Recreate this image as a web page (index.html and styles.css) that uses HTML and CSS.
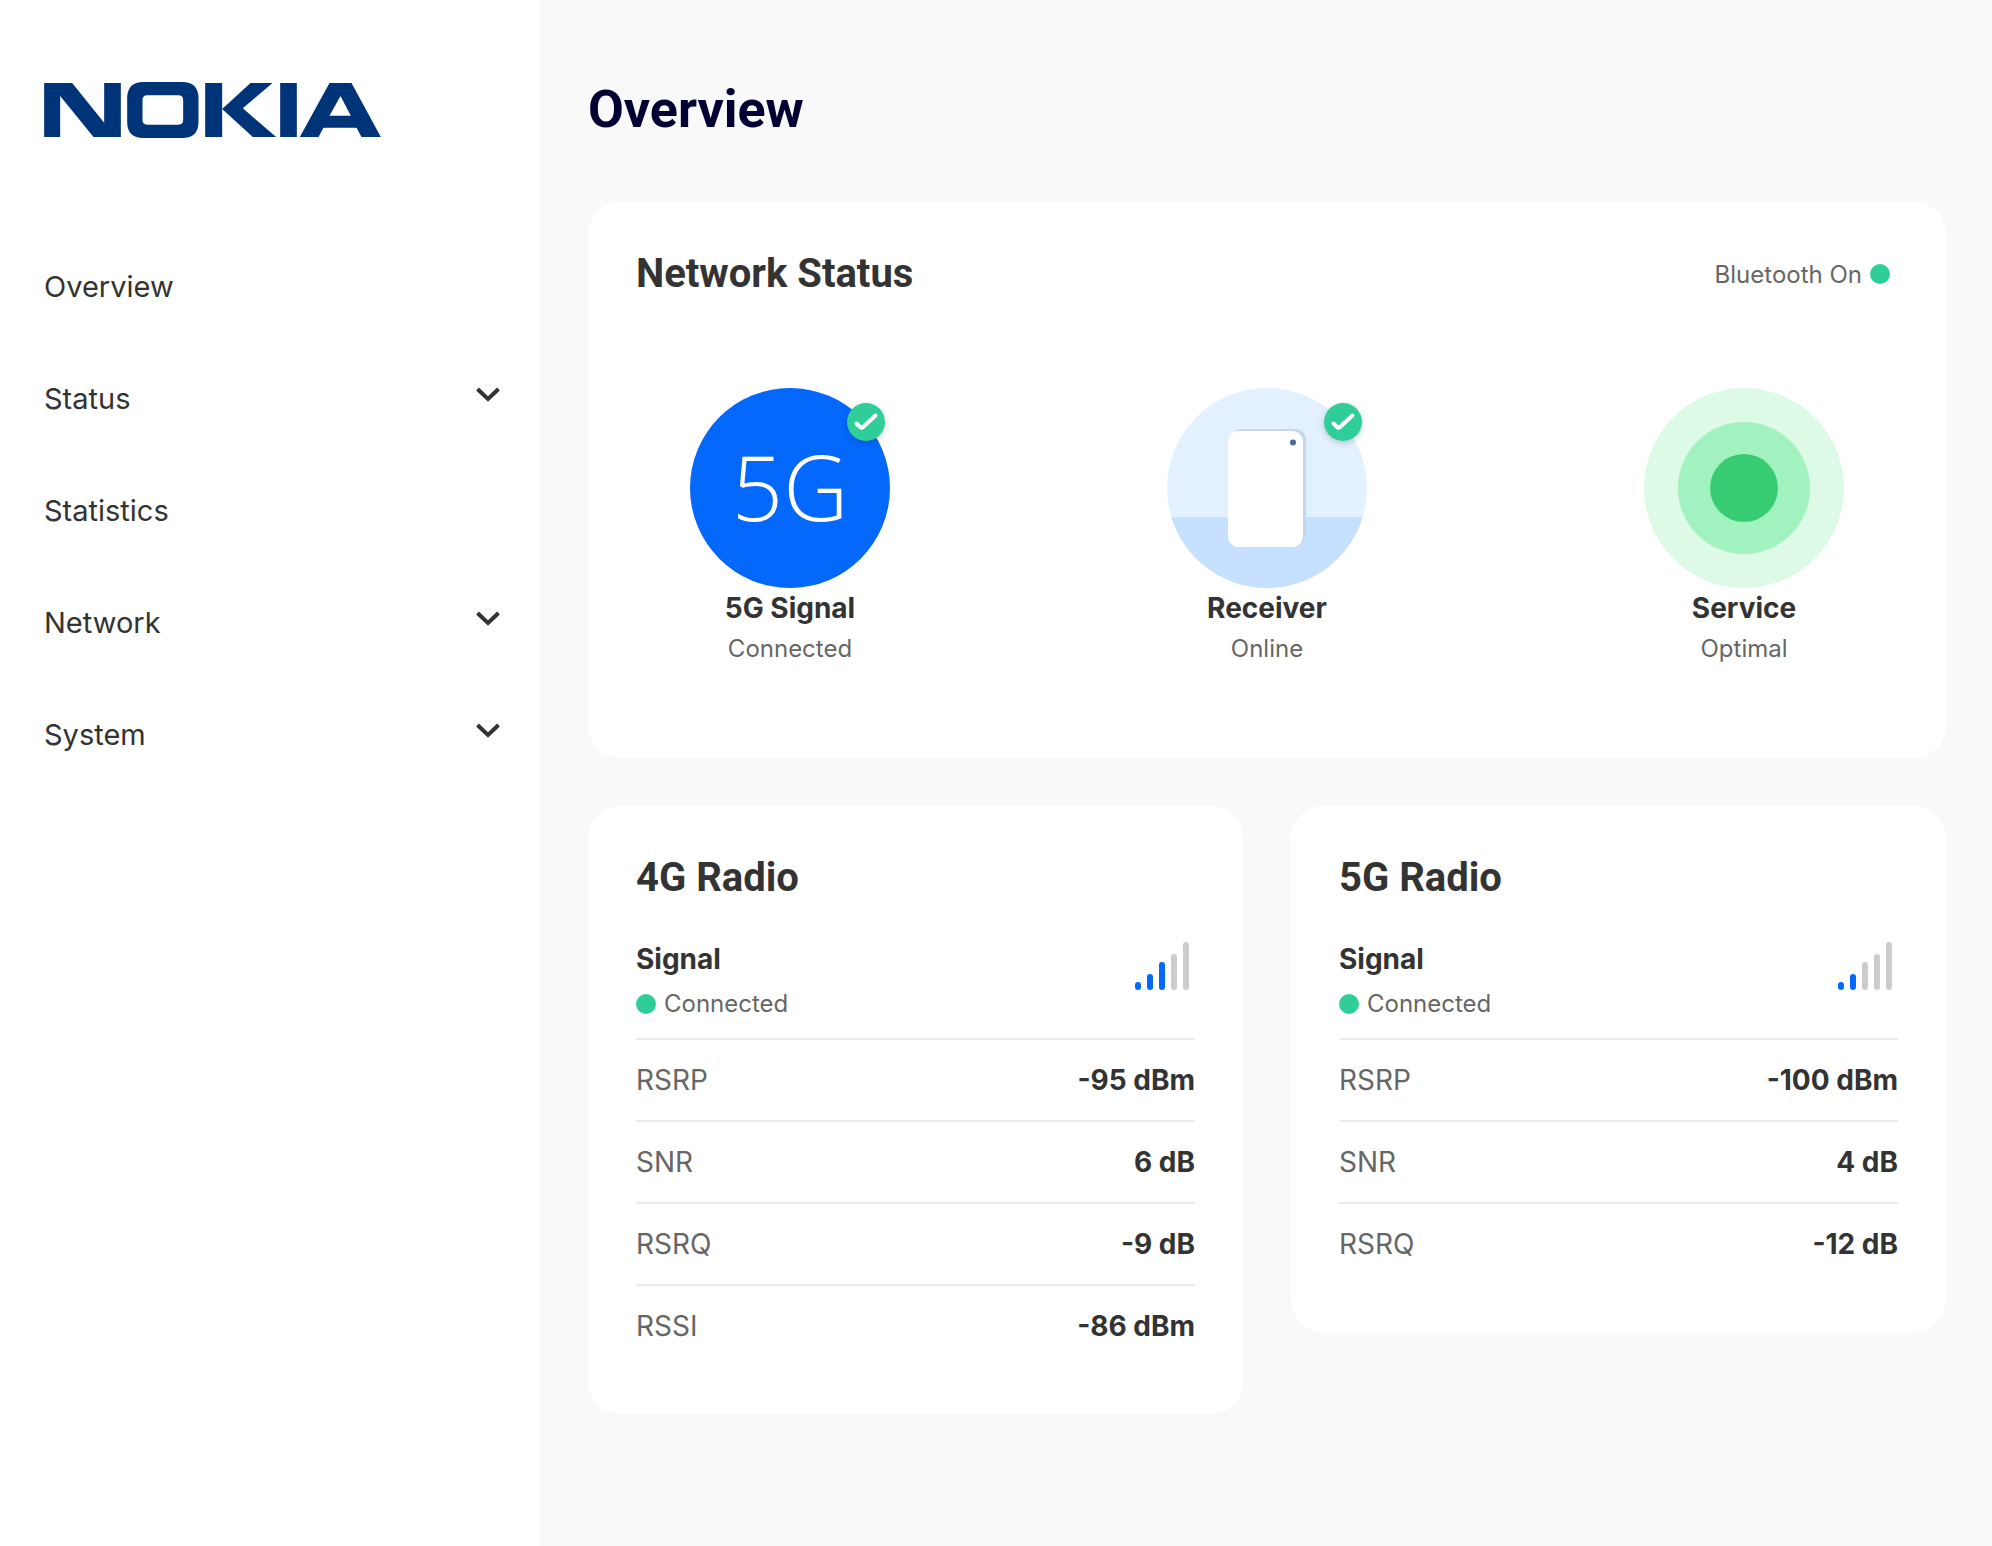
FILE: index.html
```html
<!DOCTYPE html>
<html lang="en">
<head>
<meta charset="utf-8">
<meta name="viewport" content="width=device-width, initial-scale=1">
<title>Overview</title>
<link rel="stylesheet" href="styles.css">
</head>
<body>
<div class="layout">
  <aside class="sidebar">
    <a class="brand" href="#" aria-label="Nokia">
      <svg class="brand-logo" viewBox="42 66 1010 168" aria-hidden="true">
        <path d="M42 69H126L222 188V69H272V231H190L90 108V231H42Z"/>
        <path fill-rule="evenodd" d="M340 66H456Q505 66 505 115V185Q505 234 456 234H340Q291 234 291 185V115Q291 66 340 66ZM351 106Q337 106 337 120V180Q337 194 351 194H445Q459 194 459 180V120Q459 106 445 106Z"/>
        <path d="M525 69H576V231H525ZM661 69H727L638 145L738 231H668L576 147Z"/>
        <path d="M750 69H800V231H750Z"/>
        <path fill-rule="evenodd" d="M898 69H964L1052 231H994L979 203H880L865 231H809ZM931 108L962 167H898Z"/>
      </svg>
    </a>
    <nav class="nav" aria-label="Main">
      <a class="nav-item" href="#">Overview</a>
      <button class="nav-item" type="button" aria-expanded="false">Status
        <svg class="chevron" viewBox="0 0 24 24" aria-hidden="true"><path d="M1.500 3L12 13L22.500 3"/></svg>
      </button>
      <a class="nav-item" href="#">Statistics</a>
      <button class="nav-item" type="button" aria-expanded="false">Network
        <svg class="chevron" viewBox="0 0 24 24" aria-hidden="true"><path d="M1.500 3L12 13L22.500 3"/></svg>
      </button>
      <button class="nav-item" type="button" aria-expanded="false">System
        <svg class="chevron" viewBox="0 0 24 24" aria-hidden="true"><path d="M1.500 3L12 13L22.500 3"/></svg>
      </button>
    </nav>
  </aside>

  <main class="main">
    <h1 class="page-title">Overview</h1>

    <section class="card">
      <header class="card-header">
        <h2 class="card-title">Network Status</h2>
        <p class="bluetooth">Bluetooth On<span class="dot"></span></p>
      </header>
      <div class="status-list">
        <div class="status">
          <div class="status-icon signal-icon">5G
            <svg class="badge" viewBox="0 0 38 38" aria-hidden="true"><circle cx="19" cy="19" r="19"/><path d="M9.500 20.500L13 24Q14.500 25.500 16 24L28.500 12.500"/></svg>
          </div>
          <h3 class="status-name">5G Signal</h3>
          <p class="status-value">Connected</p>
        </div>
        <div class="status">
          <div class="status-icon">
            <svg class="status-art" viewBox="0 0 200 200" aria-hidden="true">
              <circle cx="100" cy="100" r="100" fill="#e3f1ff"/>
              <path d="M4.300 129H195.700A100 100 0 0 1 4.300 129Z" fill="#c6e1ff"/>
              <rect x="64" y="41" width="75" height="116" rx="11" fill="#c5d6ed"/>
              <rect x="61" y="43" width="75" height="116" rx="11" fill="#fff"/>
              <circle cx="126" cy="54.500" r="3" fill="#4d6891"/>
            </svg>
            <svg class="badge" viewBox="0 0 38 38" aria-hidden="true"><circle cx="19" cy="19" r="19"/><path d="M9.500 20.500L13 24Q14.500 25.500 16 24L28.500 12.500"/></svg>
          </div>
          <h3 class="status-name">Receiver</h3>
          <p class="status-value">Online</p>
        </div>
        <div class="status">
          <div class="status-icon">
            <svg class="status-art" viewBox="0 0 200 200" aria-hidden="true">
              <circle cx="100" cy="100" r="100" fill="#dcfae6"/>
              <circle cx="100" cy="100" r="66" fill="#a1f2be"/>
              <circle cx="100" cy="100" r="34" fill="#38cc73"/>
            </svg>
          </div>
          <h3 class="status-name">Service</h3>
          <p class="status-value">Optimal</p>
        </div>
      </div>
    </section>

    <div class="radios">
      <section class="card">
        <h2 class="card-title">4G Radio</h2>
        <div class="signal">
          <div>
            <h3 class="signal-name">Signal</h3>
            <p class="signal-state"><span class="dot"></span>Connected</p>
          </div>
          <svg class="bars" viewBox="0 0 54 48" role="img" aria-label="3 of 5 bars">
            <rect class="on" x="0" y="40" width="6" height="8" rx="3"/>
            <rect class="on" x="12" y="32" width="6" height="16" rx="3"/>
            <rect class="on" x="24" y="20" width="6" height="28" rx="3"/>
            <rect x="36" y="12" width="6" height="36" rx="3"/>
            <rect x="48" y="0" width="6" height="48" rx="3"/>
          </svg>
        </div>
        <table class="readings">
          <tr><th scope="row">RSRP</th><td>-95 dBm</td></tr>
          <tr><th scope="row">SNR</th><td>6 dB</td></tr>
          <tr><th scope="row">RSRQ</th><td>-9 dB</td></tr>
          <tr><th scope="row">RSSI</th><td>-86 dBm</td></tr>
        </table>
      </section>
      <section class="card">
        <h2 class="card-title">5G Radio</h2>
        <div class="signal">
          <div>
            <h3 class="signal-name">Signal</h3>
            <p class="signal-state"><span class="dot"></span>Connected</p>
          </div>
          <svg class="bars" viewBox="0 0 54 48" role="img" aria-label="2 of 5 bars">
            <rect class="on" x="0" y="40" width="6" height="8" rx="3"/>
            <rect class="on" x="12" y="32" width="6" height="16" rx="3"/>
            <rect x="24" y="20" width="6" height="28" rx="3"/>
            <rect x="36" y="12" width="6" height="36" rx="3"/>
            <rect x="48" y="0" width="6" height="48" rx="3"/>
          </svg>
        </div>
        <table class="readings">
          <tr><th scope="row">RSRP</th><td>-100 dBm</td></tr>
          <tr><th scope="row">SNR</th><td>4 dB</td></tr>
          <tr><th scope="row">RSRQ</th><td>-12 dB</td></tr>
        </table>
      </section>
    </div>
  </main>
</div>
</body>
</html>
```
FILE: styles.css
```css
*, *::before, *::after { box-sizing: border-box; }

body {
  margin: 0;
  background: #f9f9f9;
  color: #333;
  font-family: Inter, "Liberation Sans", sans-serif;
  font-size: 28px;
}

h1, h2, h3, p { margin: 0; }

.layout {
  display: flex;
  min-height: 100vh;
}

/* Sidebar */
.sidebar {
  flex: 0 0 540px;
  padding: 82px 40px 48px 44px;
  background: #fff;
}

.brand { display: block; }

.brand-logo {
  display: block;
  width: 337px;
  height: 56px;
  fill: #003478;
}

.nav {
  display: flex;
  flex-direction: column;
  margin-top: 92px;
}

.nav-item {
  display: flex;
  align-items: center;
  justify-content: space-between;
  height: 112px;
  padding: 0;
  border: 0;
  background: none;
  color: #333;
  font: inherit;
  font-size: 29px;
  text-align: left;
  text-decoration: none;
  cursor: pointer;
}

.chevron {
  width: 24px;
  height: 24px;
  overflow: visible;
  fill: none;
  stroke: #333;
  stroke-width: 4;
}

/* Main column */
.main {
  flex: 1;
  min-width: 0;
  padding: 78px 46px 48px 48px;
}

.page-title {
  margin-bottom: 60px;
  color: #003;
  font: 700 52px/64px Roboto, sans-serif;
}

.card {
  padding: 48px;
  border-radius: 32px;
  background: #fff;
}

.card-header {
  display: flex;
  align-items: center;
  justify-content: space-between;
}

.card-title {
  font: 700 40px/48px Roboto, sans-serif;
}

.dot {
  flex: none;
  width: 20px;
  height: 20px;
  border-radius: 50%;
  background: #2fce98;
}

.bluetooth {
  display: flex;
  align-items: center;
  gap: 8px;
  padding-right: 8px;
  color: #666;
  font-size: 24px;
}

.status-list {
  display: flex;
  justify-content: space-between;
  padding: 90px 54px 40px;
}

.status {
  width: 200px;
  text-align: center;
}

.status-icon {
  position: relative;
  height: 200px;
}

.signal-icon {
  border-radius: 50%;
  background: #0568fd;
  color: #fff;
  font: 300 90px/196px "Open Sans", sans-serif;
}

.status-art {
  display: block;
  width: 200px;
  height: 200px;
}

.badge {
  position: absolute;
  top: 15px;
  right: 5px;
  width: 38px;
  height: 38px;
  overflow: visible;
  border-radius: 50%;
  box-shadow: 0 2px 6px rgba(0, 0, 0, 0.2);
  fill: #2fce98;
}

.badge path {
  fill: none;
  stroke: #fff;
  stroke-width: 4;
  stroke-linecap: round;
}

.status-name {
  font-size: 28px;
  line-height: 40px;
}

.status-value {
  color: #666;
  font-size: 24px;
  line-height: 42px;
}

/* Radio cards */
.radios {
  display: grid;
  grid-template-columns: 1fr 1fr;
  align-items: start;
  gap: 48px;
  margin-top: 48px;
}

.signal {
  display: flex;
  align-items: flex-start;
  justify-content: space-between;
  padding: 36px 6px 10px 0;
}

.signal-name {
  font-size: 28px;
  line-height: 42px;
}

.signal-state {
  display: flex;
  align-items: center;
  gap: 8px;
  color: #666;
  font-size: 24px;
  line-height: 48px;
}

.bars {
  width: 54px;
  height: 48px;
  margin-top: 4px;
  fill: #ccc;
}

.bars .on { fill: #0568fd; }

.readings {
  width: 100%;
  border-spacing: 0;
}

.readings th,
.readings td {
  height: 82px;
  padding: 0;
  border-top: 2px solid #ebebeb;
}

.readings th {
  color: #666;
  font-weight: 400;
  text-align: left;
}

.readings td {
  font-weight: 700;
  text-align: right;
}
```
